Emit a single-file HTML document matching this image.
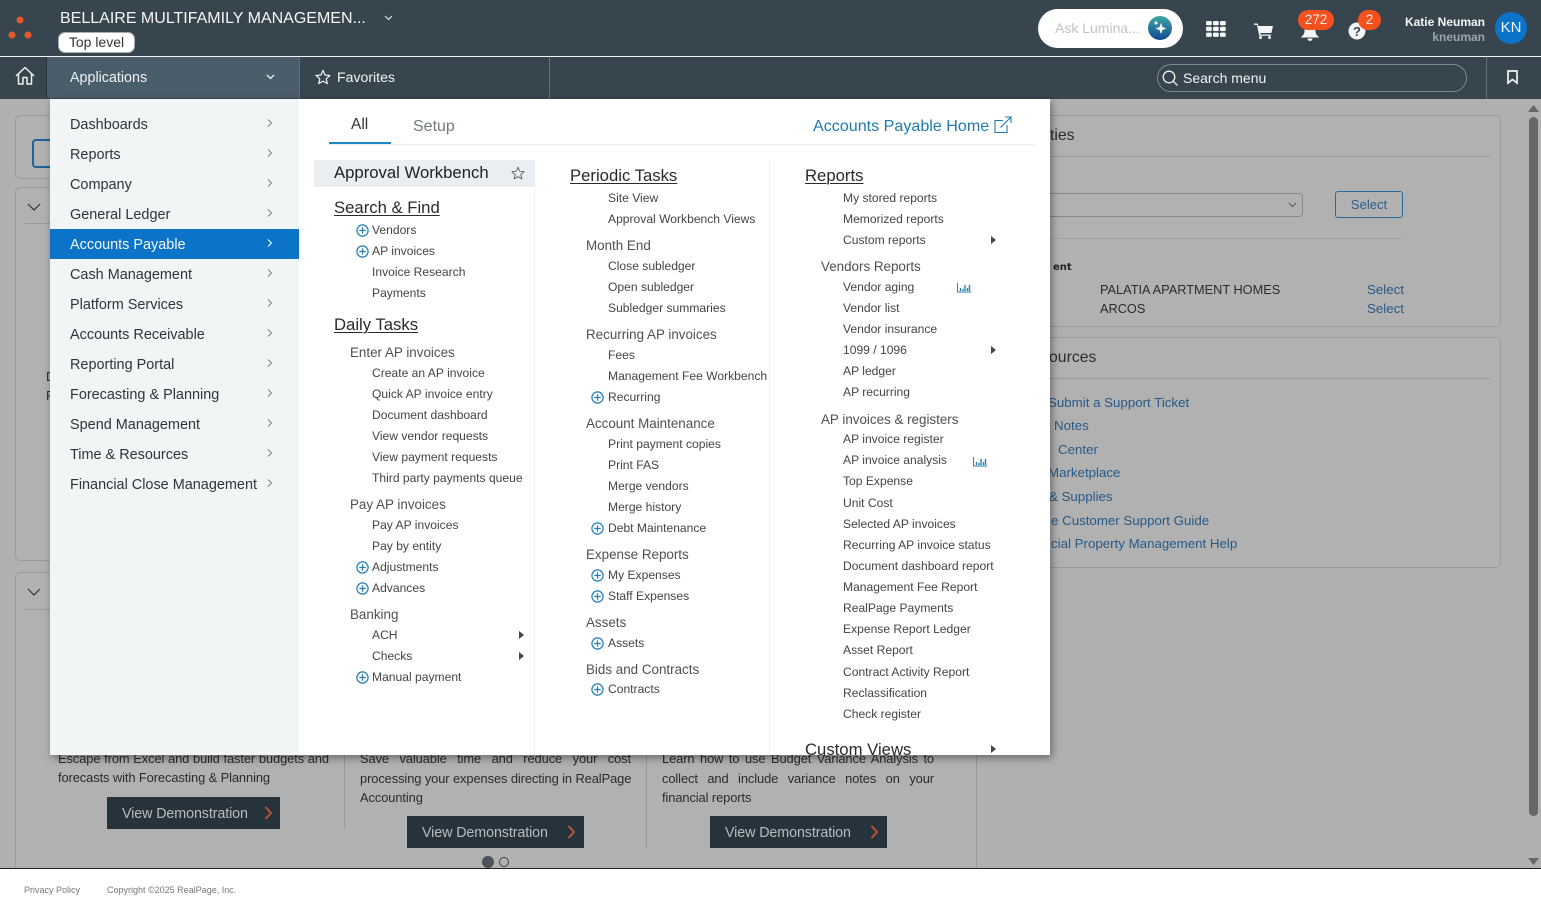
<!DOCTYPE html>
<html><head><meta charset="utf-8"><title>Accounts Payable</title>
<style>
html,body{margin:0;padding:0;width:1541px;height:911px;overflow:hidden;background:#fff;font-family:"Liberation Sans",sans-serif}
#r{position:relative;width:1541px;height:911px;overflow:hidden}
.b{position:absolute;box-sizing:border-box}
p{position:absolute;margin:0;line-height:20px;white-space:nowrap}
svg{position:absolute;overflow:visible}
.bg{left:0;top:99px;width:1541px;height:770px;background:#b0b0b0}
.pn{border:1px solid #9b9b9b;border-radius:5px;background:#b1b1b1}
.ln{background:#999}
.g p,p.g{color:#2c2c2c}
.lk{color:#265a87;font-size:13.3px}
.dp{font-size:12.9px;color:#2b2b2b;width:272px;text-align:justify;text-align-last:justify;letter-spacing:-.1px}
.dp.n{text-align-last:left}
.btn{background:#27333c;color:#b8bcbe;font-size:14.3px;height:32px;line-height:34px;letter-spacing:-.1px}
.btn span{position:absolute;left:15px;top:0;white-space:nowrap}
.nav{position:absolute;left:0;top:1px}
.nav p{left:70px;font-size:14.45px;color:#2e3438}
.m p{font-size:12.1px;color:#444}
.m .h{font-size:16.7px;color:#2a2a2a;text-decoration:underline;text-underline-offset:2px;text-decoration-thickness:1px}
.m .s{font-size:13.4px;color:#505050}
.a{left:372px}.c{left:608px}.e{left:843px}
.sa{left:350px}.sb{left:586px}.sc{left:821px}
</style></head><body><div id="r">
<svg width="0" height="0" style="position:absolute"><defs>
<symbol id="pl" viewBox="0 0 13 13"><circle cx="6.5" cy="6.5" r="5.6" fill="none" stroke="#1f7fb5" stroke-width="1.2"/><path d="M6.5 3.3v6.4M3.3 6.5h6.4" stroke="#1f7fb5" stroke-width="1.2"/></symbol>
<symbol id="ch" viewBox="0 0 15 11"><path d="M.5 1v9h14" fill="none" stroke="#2a7fb0" stroke-width="1"/><path d="M3.5 6v3M6 7v2M8 3v6M10.5 6v3M12.5 3v6" stroke="#2a7fb0" stroke-width="1.4"/></symbol>
<symbol id="cv" viewBox="0 0 8 10"><path d="M2 1.5l3.500 3.500-3.500 3.500" fill="none" stroke="#7c8488" stroke-width="1"/></symbol>
</defs></svg>

<!-- page behind -->
<div class="b bg"></div>
<div class="b pn" style="left:15px;top:115px;width:400px;height:64px"></div>
<div class="b" style="left:32px;top:139px;width:60px;height:29px;border:2px solid #1e6299;border-radius:4px"></div>
<div class="b pn" style="left:15px;top:187px;width:961px;height:374px"></div>
<div class="b ln" style="left:25px;top:223px;width:300px;height:1px"></div>
<svg style="left:27px;top:203px" width="14" height="9" viewBox="0 0 14 9"><path d="M1 1l6 6 6-6" fill="none" stroke="#333" stroke-width="1.2"/></svg>
<p class="g" style="left:46px;top:367px;font-size:13px">D</p>
<p class="g" style="left:46px;top:386px;font-size:13px">F</p>
<div class="b pn" style="left:15px;top:572px;width:962px;height:320px"></div>
<div class="b ln" style="left:25px;top:609px;width:300px;height:1px"></div>
<svg style="left:27px;top:588px" width="14" height="9" viewBox="0 0 14 9"><path d="M1 1l6 6 6-6" fill="none" stroke="#333" stroke-width="1.2"/></svg>

<p class="dp" style="left:58px;top:749px;width:271px">Escape from Excel and build faster budgets and</p>
<p class="dp n" style="left:58px;top:768px">forecasts with Forecasting &amp; Planning</p>
<p class="dp" style="left:360px;top:749px;width:271px">Save valuable time and reduce your cost</p>
<p class="dp" style="left:360px;top:769px;width:271px">processing your expenses directing in RealPage</p>
<p class="dp n" style="left:360px;top:788px">Accounting</p>
<p class="dp" style="left:662px;top:749px">Learn how to use Budget Variance Analysis to</p>
<p class="dp" style="left:662px;top:769px">collect and include variance notes on your</p>
<p class="dp n" style="left:662px;top:788px">financial reports</p>
<div class="b ln" style="left:344px;top:750px;width:1px;height:79px"></div>
<div class="b ln" style="left:646px;top:750px;width:1px;height:98px"></div>
<div class="b btn" style="left:107px;top:797px;width:173px"><span>View Demonstration</span></div>
<div class="b btn" style="left:407px;top:816px;width:177px"><span>View Demonstration</span></div>
<div class="b btn" style="left:710px;top:816px;width:177px"><span>View Demonstration</span></div>
<svg style="left:264px;top:806px" width="9" height="14" viewBox="0 0 9 14"><path d="M1.5 1l5.5 6-5.500 6" fill="none" stroke="#b8532b" stroke-width="2"/></svg>
<svg style="left:567px;top:825px" width="9" height="14" viewBox="0 0 9 14"><path d="M1.5 1l5.5 6-5.500 6" fill="none" stroke="#b8532b" stroke-width="2"/></svg>
<svg style="left:870px;top:825px" width="9" height="14" viewBox="0 0 9 14"><path d="M1.5 1l5.5 6-5.500 6" fill="none" stroke="#b8532b" stroke-width="2"/></svg>
<div class="b" style="left:482px;top:856px;width:12px;height:12px;border-radius:50%;background:#4d5257"></div>
<div class="b" style="left:499px;top:857px;width:10px;height:10px;border-radius:50%;border:1px solid #444"></div>

<div class="b pn" style="left:1000px;top:115px;width:501px;height:212px"></div>
<div class="b ln" style="left:1000px;top:156px;width:490px;height:1px"></div>
<p class="g" style="left:1050px;top:126px;font-size:15.800px">ties</p>
<div class="b" style="left:1000px;top:193px;width:303px;height:24px;border:1px solid #888;border-radius:4px"></div>
<svg style="left:1288px;top:202px" width="9" height="6" viewBox="0 0 9 6"><path d="M1 1l3.500 3.500L8 1" fill="none" stroke="#555" stroke-width="1"/></svg>
<div class="b" style="left:1335px;top:191px;width:68px;height:27px;border:1px solid #2a6a9a;border-radius:3px;color:#2a6090;font-size:13px;text-align:center;line-height:26px">Select</div>
<div class="b" style="left:1000px;top:238px;width:403px;height:1px;background:#a2a2a2"></div>
<p style="left:1053px;top:258px;font:bold 10px/20px 'DejaVu Sans',sans-serif;color:#222">ent</p>
<p class="g" style="left:1100px;top:280px;font-size:12.750px">PALATIA APARTMENT HOMES</p>
<p class="g" style="left:1100px;top:299px;font-size:12.750px">ARCOS</p>
<p class="lk" style="left:1367px;top:280px">Select</p>
<p class="lk" style="left:1367px;top:299px">Select</p>

<div class="b pn" style="left:1000px;top:337px;width:501px;height:231px"></div>
<div class="b ln" style="left:1000px;top:378px;width:490px;height:1px"></div>
<p class="g" style="left:1049px;top:348px;font-size:15.800px">ources</p>
<p class="lk" style="left:1048px;top:393px">Submit a Support Ticket</p>
<p class="lk" style="left:1054px;top:416px">Notes</p>
<p class="lk" style="left:1058px;top:440px">Center</p>
<p class="lk" style="left:1048px;top:463px">Marketplace</p>
<p class="lk" style="left:1049px;top:487px">&amp; Supplies</p>
<p class="lk" style="left:1051px;top:511px">e Customer Support Guide</p>
<p class="lk" style="left:1051px;top:534px">cial Property Management Help</p>
<div class="b" style="left:976px;top:568px;width:1px;height:301px;background:#999"></div>

<!-- scrollbar -->
<div class="b" style="left:1529px;top:117px;width:9px;height:699px;border-radius:5px;background:#666"></div>
<svg style="left:1528px;top:105px" width="11" height="7"><path d="M5.500 0L11 7H0z" fill="#666"/></svg>
<svg style="left:1528px;top:858px" width="11" height="7"><path d="M0 0h11L5.500 7z" fill="#666"/></svg>

<!-- footer -->
<div class="b" style="left:0;top:868px;width:1541px;height:43px;background:#fff;border-top:1px solid #222"></div>
<p style="left:24px;top:880px;font-size:9px;color:#777">Privacy Policy</p>
<p style="left:107px;top:880px;font-size:9px;color:#777">Copyright ©2025 RealPage, Inc.</p>

<!-- top header -->
<div class="b" style="left:0;top:0;width:1541px;height:56px;background:#37454f"></div>
<div class="b" style="left:0;top:56px;width:1541px;height:1px;background:#f2f4f5"></div>
<div class="b" style="left:0;top:57px;width:1541px;height:42px;background:#37454f"></div>
<svg style="left:8px;top:14px" width="28" height="26" viewBox="0 0 28 26"><circle cx="12" cy="6" r="3.500" fill="#e25a2c"/><circle cx="4" cy="21" r="3.500" fill="#e25a2c"/><circle cx="20" cy="21" r="3.500" fill="#e25a2c"/></svg>
<p style="left:60px;top:9px;font-size:16px;color:#f4f6f7">BELLAIRE MULTIFAMILY MANAGEMEN...</p>
<svg style="left:384px;top:15px" width="9" height="6" viewBox="0 0 9 6"><path d="M1 1l3.500 3.500L8 1" fill="none" stroke="#e0e4e6" stroke-width="1.200"/></svg>
<div class="b" style="left:58px;top:32px;width:77px;height:21px;background:#fff;border-radius:7px;border:1px solid #aab;color:#333;font-size:14px;line-height:19px;text-align:center">Top level</div>

<div class="b" style="left:1038px;top:9px;width:145px;height:39px;background:#fff;border-radius:20px"></div>
<p style="left:1055px;top:18px;font-size:14px;color:#c0c4c7">Ask Lumina...</p>
<svg style="left:1148px;top:16px" width="24" height="24" viewBox="0 0 24 24"><defs><linearGradient id="lg" x1="0" y1="0" x2="0" y2="1"><stop offset="0" stop-color="#3fa7a8"/><stop offset="1" stop-color="#12488f"/></linearGradient></defs><circle cx="12" cy="12" r="12" fill="url(#lg)"/><path d="M13 7l1.500 4 4 1.500-4 1.500-1.500 4-1.500-4-4-1.500 4-1.500z" fill="#fff"/><path d="M8 4.500l.7 1.800 1.800.7-1.800.7L8 9.500l-.7-1.800L5.500 7l1.800-.7z" fill="#fff"/></svg>

<svg style="left:1206px;top:21px" width="20" height="16" viewBox="0 0 20 16" fill="#f4f6f7"><rect x="0" y="0" width="5.800" height="4.300" rx="1.200"/><rect x="7" y="0" width="5.800" height="4.300" rx="1.200"/><rect x="14" y="0" width="5.800" height="4.300" rx="1.200"/><rect x="0" y="5.800" width="5.800" height="4.300" rx="1.200"/><rect x="7" y="5.800" width="5.800" height="4.300" rx="1.200"/><rect x="14" y="5.800" width="5.800" height="4.300" rx="1.200"/><rect x="0" y="11.600" width="5.800" height="4.300" rx="1.200"/><rect x="7" y="11.600" width="5.800" height="4.300" rx="1.200"/><rect x="14" y="11.600" width="5.800" height="4.300" rx="1.200"/></svg>
<svg style="left:1254px;top:23px" width="19" height="16" viewBox="0 0 19 16" fill="#f4f6f7"><path d="M0 .5h3.500l1 2.500H19l-1.600 7H6.200l.3 1.500h10.500v1.300H5.200L3 1.900H0z"/><circle cx="6.500" cy="14.500" r="1.500"/><circle cx="15.500" cy="14.500" r="1.500"/></svg>
<svg style="left:1300px;top:24px" width="20" height="17" viewBox="0 0 20 17" fill="#f4f6f7"><path d="M10 0c4 0 5.500 3 5.500 7 0 3 1.500 4.500 4 6.500H.5c2.500-2 4-3.500 4-6.500C4.500 3 6 0 10 0z"/><path d="M7.500 14.500h5a2.500 2.500 0 0 1-5 0z"/></svg>
<div class="b" style="left:1298px;top:10px;width:36px;height:20px;border-radius:10px;background:#f3521e;color:#ffe9e0;font-size:13.500px;line-height:19px;text-align:center">272</div>
<svg style="left:1348px;top:22px" width="18" height="18" viewBox="0 0 18 18"><circle cx="9" cy="9" r="8.500" fill="#f4f6f7"/><text x="9" y="14" font-family="Liberation Sans" font-weight="bold" font-size="13" text-anchor="middle" fill="#37454f">?</text></svg>
<div class="b" style="left:1358px;top:10px;width:23px;height:20px;border-radius:10px;background:#f3521e;color:#ffe9e0;font-size:13.500px;line-height:19px;text-align:center">2</div>
<p style="right:56px;top:12px;font-size:12px;font-weight:bold;color:#f4f6f7">Katie Neuman</p>
<p style="right:56px;top:27px;font-size:12px;font-weight:bold;color:#9aa5ac">kneuman</p>
<div class="b" style="left:1495px;top:12px;width:32px;height:32px;border-radius:50%;background:#0b74c8;color:#eef6fc;font-size:15px;line-height:32px;text-align:center">KN</div>

<!-- menu bar -->
<svg style="left:15px;top:66px" width="20" height="20" viewBox="0 0 20 20" fill="none" stroke="#eef1f2" stroke-width="1.500" stroke-linejoin="round"><path d="M1 10l9-8.500 9 8.500"/><path d="M3.500 8v10h4.500v-6.500h4V18h4.500V8"/></svg>
<div class="b" style="left:46px;top:57px;width:1px;height:42px;background:#29343b"></div>
<div class="b" style="left:47px;top:57px;width:252px;height:41px;background:#4a5d6a"></div>
<p style="left:70px;top:68px;font-size:14.300px;color:#f0f3f4">Applications</p>
<svg style="left:266px;top:74px" width="9" height="6" viewBox="0 0 9 6"><path d="M1 1l3.500 3.500L8 1" fill="none" stroke="#f0f3f4" stroke-width="1.300"/></svg>
<div class="b" style="left:299px;top:57px;width:1px;height:42px;background:#5e6f7a"></div>
<svg style="left:315px;top:69px" width="16" height="16" viewBox="0 0 24 24" fill="none" stroke="#f0f3f4" stroke-width="1.800" stroke-linejoin="round"><path d="M12 2l3 7 7.500.7-5.700 5 1.700 7.300L12 18.200 5.500 22l1.700-7.300-5.700-5L9 9z"/></svg>
<p style="left:337px;top:67px;font-size:14.100px;color:#f0f3f4">Favorites</p>
<div class="b" style="left:549px;top:57px;width:1px;height:42px;background:#5e6f7a"></div>
<div class="b" style="left:1157px;top:64px;width:310px;height:28px;border:1px solid #7c8a93;border-radius:14px"></div>
<svg style="left:1162px;top:70px" width="17" height="17" viewBox="0 0 17 17" fill="none" stroke="#f0f3f4" stroke-width="1.300"><circle cx="7" cy="7" r="5.800"/><path d="M11.200 11.200L15.500 15.500"/></svg>
<p style="left:1183px;top:68px;font-size:14px;color:#f0f3f4">Search menu</p>
<div class="b" style="left:1486px;top:57px;width:1px;height:42px;background:#5e6f7a"></div>
<svg style="left:1507px;top:70px" width="11" height="14" viewBox="0 0 11 14"><path d="M1 1h9v12L5.500 9.500 1 13z" fill="none" stroke="#f4f6f7" stroke-width="1.700"/></svg>

<!-- flyout -->
<div class="b" style="left:50px;top:99px;width:1000px;height:656px;background:#fff;box-shadow:2px 3px 8px rgba(0,0,0,.4);overflow:hidden">
 <div class="b" style="left:0;top:0;width:249px;height:656px;background:#f1f5f6"></div>
 <div class="b" style="left:0;top:130px;width:249px;height:30px;background:#0b74c8"></div>
</div>
<div class="nav">
<p style="top:114px">Dashboards</p><p style="top:144px">Reports</p><p style="top:174px">Company</p><p style="top:204px">General Ledger</p>
<p style="top:234px;color:#f4f8fb">Accounts Payable</p><p style="top:264px">Cash Management</p><p style="top:294px">Platform Services</p>
<p style="top:324px">Accounts Receivable</p><p style="top:354px">Reporting Portal</p><p style="top:384px">Forecasting &amp; Planning</p>
<p style="top:414px">Spend Management</p><p style="top:444px">Time &amp; Resources</p><p style="top:474px">Financial Close Management</p>
</div>
<svg style="left:266px;top:118px" width="8" height="10"><use href="#cv"/></svg><svg style="left:266px;top:148px" width="8" height="10"><use href="#cv"/></svg><svg style="left:266px;top:178px" width="8" height="10"><use href="#cv"/></svg><svg style="left:266px;top:208px" width="8" height="10"><use href="#cv"/></svg>
<svg style="left:266px;top:238px" width="8" height="10" viewBox="0 0 8 10"><path d="M2 1.500l3.500 3.500-3.500 3.500" fill="none" stroke="#fff" stroke-width="1"/></svg>
<svg style="left:266px;top:268px" width="8" height="10"><use href="#cv"/></svg><svg style="left:266px;top:298px" width="8" height="10"><use href="#cv"/></svg><svg style="left:266px;top:328px" width="8" height="10"><use href="#cv"/></svg><svg style="left:266px;top:358px" width="8" height="10"><use href="#cv"/></svg><svg style="left:266px;top:388px" width="8" height="10"><use href="#cv"/></svg><svg style="left:266px;top:418px" width="8" height="10"><use href="#cv"/></svg><svg style="left:266px;top:448px" width="8" height="10"><use href="#cv"/></svg><svg style="left:266px;top:478px" width="8" height="10"><use href="#cv"/></svg>

<div class="b" style="left:329px;top:144px;width:706px;height:1px;background:#eceff0"></div>
<div class="b" style="left:329px;top:142px;width:62px;height:2px;background:#1e88c8"></div>
<p style="left:351px;top:115px;font-size:15.500px;color:#333">All</p>
<p style="left:413px;top:117px;font-size:16px;color:#737b80">Setup</p>
<p style="left:813px;top:116px;font-size:16.100px;color:#1f7aad">Accounts Payable Home</p>
<svg style="left:994px;top:116px" width="18" height="18" viewBox="0 0 18 18" fill="none" stroke="#1f7aad" stroke-width="1.100"><path d="M13 9v7.500H1V4.500h8"/><path d="M6.500 11.500L17 1M11 1h6v6"/></svg>

<div class="b" style="left:314px;top:160px;width:221px;height:27px;background:#e8eef1"></div>
<div class="b" style="left:534px;top:187px;width:1px;height:568px;background:#f0f2f3"></div>
<div class="b" style="left:769px;top:160px;width:1px;height:595px;background:#f0f2f3"></div>
<p style="left:334px;top:163px;font-size:16.700px;color:#222">Approval Workbench</p>
<svg style="left:511px;top:166px" width="14" height="14" viewBox="0 0 24 24" fill="none" stroke="#555" stroke-width="1.500" stroke-linejoin="round"><path d="M12 2l3 7 7.500.7-5.700 5 1.700 7.300L12 18.200 5.500 22l1.700-7.300-5.700-5L9 9z"/></svg>

<div class="m">
<!-- column 1 -->
<p class="h" style="left:334px;top:198px">Search &amp; Find</p>
<p class="a" style="top:220px">Vendors</p><p class="a" style="top:241px">AP invoices</p><p class="a" style="top:262px">Invoice Research</p><p class="a" style="top:283px">Payments</p>
<p class="h" style="left:334px;top:315px">Daily Tasks</p>
<p class="s sa" style="top:343px">Enter AP invoices</p>
<p class="a" style="top:363px">Create an AP invoice</p><p class="a" style="top:384px">Quick AP invoice entry</p><p class="a" style="top:405px">Document dashboard</p><p class="a" style="top:426px">View vendor requests</p><p class="a" style="top:447px">View payment requests</p><p class="a" style="top:468px">Third party payments queue</p>
<p class="s sa" style="top:495px">Pay AP invoices</p>
<p class="a" style="top:515px">Pay AP invoices</p><p class="a" style="top:536px">Pay by entity</p><p class="a" style="top:557px">Adjustments</p><p class="a" style="top:578px">Advances</p>
<p class="s sa" style="top:605px">Banking</p>
<p class="a" style="top:625px">ACH</p><p class="a" style="top:646px">Checks</p><p class="a" style="top:667px">Manual payment</p>
<!-- column 2 -->
<p class="h" style="left:570px;top:166px">Periodic Tasks</p>
<p class="c" style="top:188px">Site View</p><p class="c" style="top:209px">Approval Workbench Views</p>
<p class="s sb" style="top:236px">Month End</p>
<p class="c" style="top:256px">Close subledger</p><p class="c" style="top:277px">Open subledger</p><p class="c" style="top:298px">Subledger summaries</p>
<p class="s sb" style="top:325px">Recurring AP invoices</p>
<p class="c" style="top:345px">Fees</p><p class="c" style="top:366px">Management Fee Workbench</p><p class="c" style="top:387px">Recurring</p>
<p class="s sb" style="top:414px">Account Maintenance</p>
<p class="c" style="top:434px">Print payment copies</p><p class="c" style="top:455px">Print FAS</p><p class="c" style="top:476px">Merge vendors</p><p class="c" style="top:497px">Merge history</p><p class="c" style="top:518px">Debt Maintenance</p>
<p class="s sb" style="top:545px">Expense Reports</p>
<p class="c" style="top:565px">My Expenses</p><p class="c" style="top:586px">Staff Expenses</p>
<p class="s sb" style="top:613px">Assets</p>
<p class="c" style="top:633px">Assets</p>
<p class="s sb" style="top:660px">Bids and Contracts</p>
<p class="c" style="top:679px">Contracts</p>
<!-- column 3 -->
<p class="h" style="left:805px;top:166px">Reports</p>
<p class="e" style="top:188px">My stored reports</p><p class="e" style="top:209px">Memorized reports</p><p class="e" style="top:230px">Custom reports</p>
<p class="s sc" style="top:257px">Vendors Reports</p>
<p class="e" style="top:277px">Vendor aging</p><p class="e" style="top:298px">Vendor list</p><p class="e" style="top:319px">Vendor insurance</p><p class="e" style="top:340px">1099 / 1096</p><p class="e" style="top:361px">AP ledger</p><p class="e" style="top:382px">AP recurring</p>
<p class="s sc" style="top:410px">AP invoices &amp; registers</p>
<p class="e" style="top:429px">AP invoice register</p><p class="e" style="top:450px">AP invoice analysis</p><p class="e" style="top:471px">Top Expense</p><p class="e" style="top:493px">Unit Cost</p><p class="e" style="top:514px">Selected AP invoices</p><p class="e" style="top:535px">Recurring AP invoice status</p><p class="e" style="top:556px">Document dashboard report</p><p class="e" style="top:577px">Management Fee Report</p><p class="e" style="top:598px">RealPage Payments</p><p class="e" style="top:619px">Expense Report Ledger</p><p class="e" style="top:640px">Asset Report</p><p class="e" style="top:662px">Contract Activity Report</p><p class="e" style="top:683px">Reclassification</p><p class="e" style="top:704px">Check register</p>
</div>
<div class="b" style="left:800px;top:735px;width:180px;height:20px;overflow:hidden"><p style="left:5px;top:5px;font-size:16.700px;color:#2a2a2a">Custom Views</p></div>

<!-- plus icons -->
<svg style="left:356px;top:223.500px" width="13" height="13"><use href="#pl"/></svg>
<svg style="left:356px;top:244.500px" width="13" height="13"><use href="#pl"/></svg>
<svg style="left:356px;top:560.500px" width="13" height="13"><use href="#pl"/></svg>
<svg style="left:356px;top:581.500px" width="13" height="13"><use href="#pl"/></svg>
<svg style="left:356px;top:670.500px" width="13" height="13"><use href="#pl"/></svg>
<svg style="left:591px;top:390.500px" width="13" height="13"><use href="#pl"/></svg>
<svg style="left:591px;top:521.500px" width="13" height="13"><use href="#pl"/></svg>
<svg style="left:591px;top:568.500px" width="13" height="13"><use href="#pl"/></svg>
<svg style="left:591px;top:589.500px" width="13" height="13"><use href="#pl"/></svg>
<svg style="left:591px;top:636.500px" width="13" height="13"><use href="#pl"/></svg>
<svg style="left:591px;top:682.500px" width="13" height="13"><use href="#pl"/></svg>
<!-- chart icons -->
<svg style="left:957px;top:282px" width="15" height="11"><use href="#ch"/></svg>
<svg style="left:973px;top:456px" width="15" height="11"><use href="#ch"/></svg>
<!-- triangles -->
<svg style="left:519px;top:631px" width="5" height="8"><path d="M0 0l5 4-5 4z" fill="#444"/></svg>
<svg style="left:519px;top:652px" width="5" height="8"><path d="M0 0l5 4-5 4z" fill="#444"/></svg>
<svg style="left:991px;top:236px" width="5" height="8"><path d="M0 0l5 4-5 4z" fill="#444"/></svg>
<svg style="left:991px;top:346px" width="5" height="8"><path d="M0 0l5 4-5 4z" fill="#444"/></svg>
<svg style="left:991px;top:745px" width="5" height="8"><path d="M0 0l5 4-5 4z" fill="#444"/></svg>
</div></body></html>
